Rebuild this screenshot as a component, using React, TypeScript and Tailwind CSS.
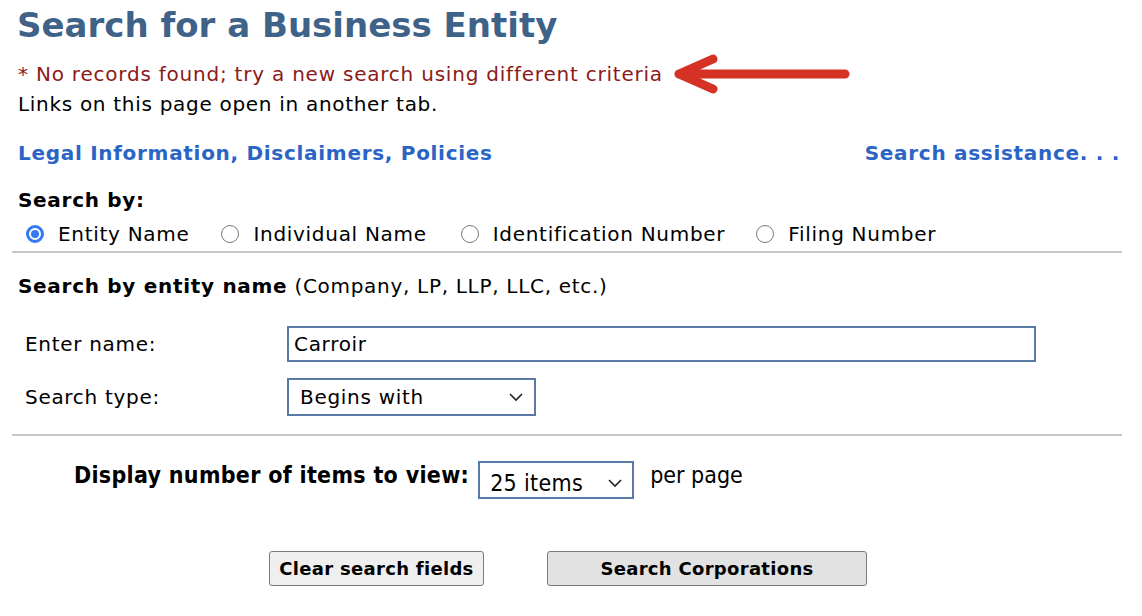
import React from 'react';

const Radio = ({ label, checked }: { label: string; checked?: boolean }) => (
  <label className="flex items-center gap-[14px]">
    {checked ? (
      <span className="w-[18px] h-[18px] rounded-full border-[3px] border-[#3478f6] bg-white flex items-center justify-center">
        <span className="w-[8px] h-[8px] rounded-full bg-[#3478f6]" />
      </span>
    ) : (
      <span className="w-[18px] h-[18px] rounded-full border border-[#7a7a7a] bg-white" />
    )}
    <span>{label}</span>
  </label>
);

const Chevron = () => (
  <svg width="16" height="10" viewBox="0 0 16 10" fill="none" stroke="#222" strokeWidth="1.6">
    <path d="M2 2l6 6 6-6" />
  </svg>
);

const App = () => {
  return (
    <div className="w-[1142px] h-[616px] bg-white text-black font-['DejaVu_Sans',Verdana,sans-serif] text-[20px] tracking-[0.7px] overflow-hidden">
      <div className="pl-[18px] pr-[22px]">
        <h1 className="text-[34px] font-bold text-[#3f6288] leading-[50px] tracking-normal -ml-[1px]">Search for a Business Entity</h1>
        <div className="flex items-center mt-[11px] h-[26px]">
          <p className="text-[#8b1a1a] leading-[26px] tracking-[0.78px]">* No records found; try a new search using different criteria</p>
          <svg width="180" height="40" viewBox="0 0 180 40" className="ml-[8px]">
            <path d="M8 20H174M8 20L42 5M8 20L42 35" stroke="#d63125" strokeWidth="9" strokeLinecap="round" strokeLinejoin="round" fill="none" />
          </svg>
        </div>
        <p className="leading-[26px] mt-[4px]">Links on this page open in another tab.</p>

        <div className="flex justify-between mt-[21px] font-bold text-[#2a64c5]">
          <a href="#">Legal Information, Disclaimers, Policies</a>
          <a href="#">Search assistance. . .</a>
        </div>

        <p className="font-bold mt-[19px] leading-[26px]">Search by:</p>
        <div className="flex pl-[8px] leading-[30px] mt-[6px]">
          <Radio label="Entity Name" checked />
          <span className="w-[32px]" />
          <Radio label="Individual Name" />
          <span className="w-[34px]" />
          <Radio label="Identification Number" />
          <span className="w-[31px]" />
          <Radio label="Filing Number" />
        </div>
      </div>

      <div className="ml-[12px] mr-[20px] border-t-2 border-[#c6c6c6] mt-[2px]" />

      <div className="pl-[18px]">
        <p className="mt-[20px] leading-[26px]">
          <span className="font-bold">Search by entity name</span> (Company, LP, LLP, LLC, etc.)
        </p>
        <div className="grid grid-cols-[262px_1fr] items-center gap-y-[16px] mt-[27px] pl-[7px]">
          <span>Enter name:</span>
          <input
            defaultValue="Carroir"
            className="w-[749px] h-[36px] border-2 border-[#5a7aa6] px-[5px] text-[20px] tracking-[0.7px] outline-none"
          />
          <span>Search type:</span>
          <div className="w-[249px] h-[38px] border-2 border-[#5a7aa6] flex items-center justify-between pl-[11px] pr-[10px]">
            <span>Begins with</span>
            <Chevron />
          </div>
        </div>
      </div>

      <div className="ml-[12px] mr-[20px] border-t-2 border-[#c6c6c6] mt-[18px]" />

      <div className="flex items-center mt-[25px] pl-[74px] font-['DejaVu_Sans_Condensed','DejaVu_Sans',sans-serif] text-[23px] tracking-normal">
        <span className="font-bold tracking-[0.3px] -mt-[10px]">Display number of items to view:</span>
        <div className="ml-[9px] w-[156px] h-[38px] border-2 border-[#5a7aa6] flex items-center justify-between pl-[10px] pr-[9px] pt-[6px]">
          <span className="tracking-[0.3px]">25 items</span>
          <Chevron />
        </div>
        <span className="ml-[16px] -mt-[10px]">per page</span>
      </div>

      <div className="flex mt-[52px] pl-[269px] gap-[63px] font-bold text-[18px] tracking-[0.3px]">
        <button className="w-[215px] h-[35px] border border-[#7a7a7a] rounded-[3px] bg-[#efefef]">Clear search fields</button>
        <button className="w-[320px] h-[35px] border border-[#7a7a7a] rounded-[3px] bg-[#e2e2e2]">Search Corporations</button>
      </div>
    </div>
  );
};

export default App;
